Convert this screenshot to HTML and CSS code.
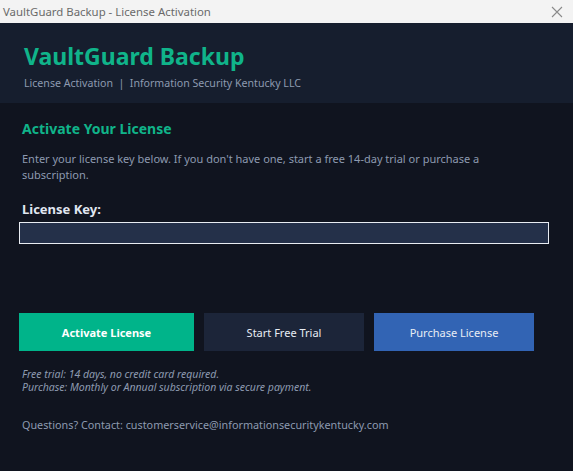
FILE: index.html
```html
<!DOCTYPE html>
<html>
<head>
<meta charset="utf-8">
<title>VaultGuard Backup - License Activation</title>
<link rel="stylesheet" href="styles.css">
</head>
<body>
<div class="window">
  <div class="titlebar">
    <span class="titlebar-text">VaultGuard Backup - License Activation</span>
    <svg class="close" width="12" height="12" viewBox="0 0 12 12"><path d="M1 1L11 11M11 1L1 11" stroke="#8a8a8a" stroke-width="1.1" fill="none"/></svg>
  </div>
  <div class="header">
    <div class="app-title">VaultGuard Backup</div>
    <div class="app-sub">License Activation &nbsp;|&nbsp; Information Security Kentucky LLC</div>
  </div>
  <div class="main">
    <div class="section-title">Activate Your License</div>
    <p class="desc">Enter your license key below. If you don't have one, start a free 14-day trial or purchase a subscription.</p>
    <div class="label">License Key:</div>
    <div class="input"></div>
    <div class="buttons">
      <div class="btn btn-activate">Activate License</div>
      <div class="btn btn-trial">Start Free Trial</div>
      <div class="btn btn-purchase">Purchase License</div>
    </div>
    <div class="notes">
      <div>Free trial: 14 days, no credit card required.</div>
      <div>Purchase: Monthly or Annual subscription via secure payment.</div>
    </div>
    <div class="contact">Questions? Contact: customerservice@informationsecuritykentucky.com</div>
  </div>
</div>
</body>
</html>
```
FILE: styles.css
```css
html, body {
  margin: 0;
  padding: 0;
  background: #10141f;
}
.window {
  width: 573px;
  height: 471px;
  display: flex;
  flex-direction: column;
  font-family: "Noto Sans", "Open Sans", sans-serif;
  background: #10141f;
  overflow: hidden;
}
.titlebar {
  height: 23px;
  background: #f3f3f3;
  display: flex;
  align-items: center;
  justify-content: space-between;
  padding: 0 10px 0 3px;
  box-sizing: border-box;
  flex-shrink: 0;
}
.titlebar-text {
  font-size: 11.4px;
  color: #6a6a6a;
}
.close {
  display: block;
}
.header {
  height: 80px;
  background: #161e2e;
  box-sizing: border-box;
  padding: 18px 24px 0 24px;
  flex-shrink: 0;
}
.app-title {
  font-size: 23px;
  font-weight: 700;
  color: #10b48a;
  line-height: 30px;
}
.app-sub {
  font-size: 10.6px;
  color: #8d9ab0;
  line-height: 16px;
  margin-top: 4px;
}
.main {
  padding: 16px 24px 0 22px;
  flex: 1;
}
.section-title {
  font-size: 14px;
  font-weight: 700;
  color: #10b48a;
  line-height: 20px;
}
.desc {
  margin: 12px 0 0 0;
  max-width: 500px;
  font-size: 11px;
  line-height: 16px;
  color: #8d9ab0;
}
.label {
  margin-top: 17px;
  font-size: 13px;
  font-weight: 700;
  color: #e0e7f1;
  line-height: 18px;
}
.input {
  margin: 4px 0 0 -3px;
  width: 530px;
  height: 22px;
  background: #243049;
  border: 1px solid #e8ecf2;
  box-sizing: border-box;
}
.buttons {
  display: flex;
  gap: 10px;
  margin: 69px 0 0 -3px;
}
.btn {
  height: 38px;
  display: flex;
  align-items: center;
  justify-content: center;
  font-size: 11px;
  color: #e8edf4;
}
.btn-activate {
  width: 175px;
  background: #00b48a;
  font-weight: 700;
  color: #ffffff;
}
.btn-trial {
  width: 160px;
  background: #1c2539;
}
.btn-purchase {
  width: 160px;
  background: #3264b4;
}
.notes {
  margin-top: 17px;
  font-size: 10.5px;
  font-style: italic;
  line-height: 13px;
  color: #8d9ab0;
}
.contact {
  margin-top: 23px;
  font-size: 10.8px;
  line-height: 16px;
  color: #8d9ab0;
}
```
